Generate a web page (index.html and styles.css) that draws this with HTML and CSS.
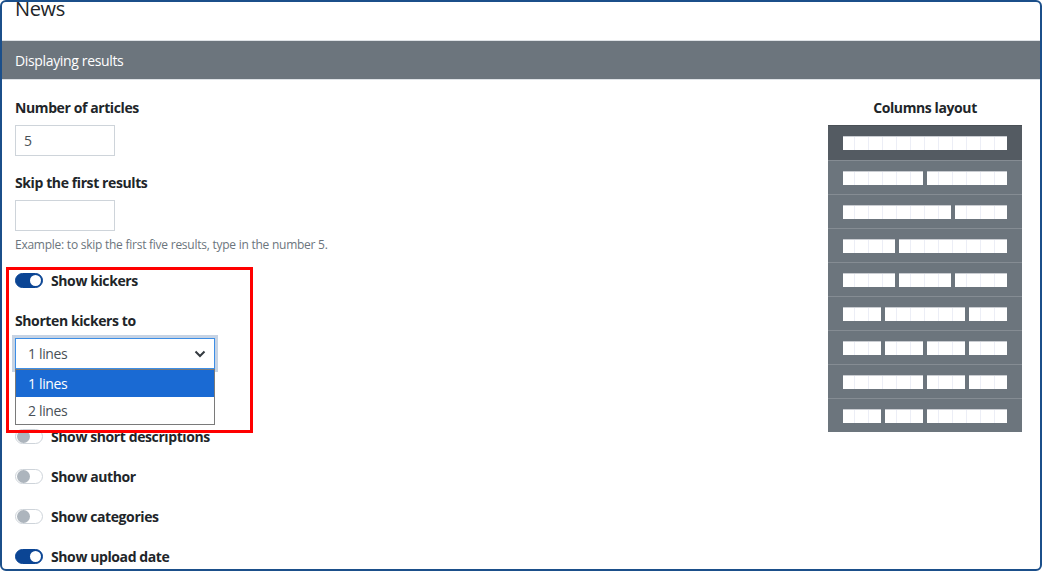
FILE: index.html
```html
<!DOCTYPE html>
<html lang="en">
<head>
    <meta charset="UTF-8">
    <meta name="viewport" content="width=device-width, initial-scale=1.0">
    <title>News module</title>
    <link rel="stylesheet" href="styles.css">
</head>
<body>
    <div class="frame">
        <div class="modal-header">
            <h2>News</h2>
        </div>
        <div class="section-bar">Displaying results</div>

        <div class="content">
            <div class="form-col">
                <div class="field">
                    <label class="field-label">Number of articles</label>
                    <input class="text-input" type="text" value="5">
                </div>
                <div class="field">
                    <label class="field-label">Skip the first results</label>
                    <input class="text-input" type="text" value="">
                    <div class="help">Example: to skip the first five results, type in the number 5.</div>
                </div>

                <div class="switch-row on">
                    <span class="switch"></span>
                    <span>Show kickers</span>
                </div>

                <div class="field select-field">
                    <label class="field-label">Shorten kickers to</label>
                    <div class="select-wrap">
                        <div class="select">
                            <span>1 lines</span>
                            <svg class="chevron" width="12" height="8" viewBox="0 0 12 8">
                                <path d="M1.5 1.5 L6 6 L10.5 1.5" fill="none" stroke="#343a40" stroke-width="2"/>
                            </svg>
                        </div>
                        <ul class="dropdown">
                            <li class="active">1 lines</li>
                            <li>2 lines</li>
                        </ul>
                    </div>
                </div>

                <div class="switch-row">
                    <span class="switch"></span>
                    <span>Show short descriptions</span>
                </div>
                <div class="switch-row">
                    <span class="switch"></span>
                    <span>Show author</span>
                </div>
                <div class="switch-row">
                    <span class="switch"></span>
                    <span>Show categories</span>
                </div>
                <div class="switch-row on">
                    <span class="switch"></span>
                    <span>Show upload date</span>
                </div>

                <div class="highlight"></div>
            </div>

            <div class="layout-col">
                <div class="field-label center">Columns layout</div>
                <div class="layouts" id="layouts"></div>
            </div>
        </div>
    </div>

    <script>
        // column spans for each layout option (12 column grid)
        const layouts = [
            [12], [6, 6], [8, 4], [4, 8], [4, 4, 4],
            [3, 6, 3], [3, 3, 3, 3], [6, 3, 3], [3, 3, 6]
        ];

        document.getElementById('layouts').innerHTML = layouts.map((cols, i) => `
            <div class="layout-row ${i === 0 ? 'selected' : ''}">
                <div class="bars">
                    ${cols.map(span => `<span class="bar" style="grid-column: span ${span}"></span>`).join('')}
                </div>
            </div>
        `).join('');
    </script>
</body>
</html>
```

FILE: styles.css
```css
* {
    margin: 0;
    padding: 0;
    box-sizing: border-box;
}

body {
    font-family: 'Segoe UI', 'Open Sans', sans-serif;
    font-size: 14px;
    letter-spacing: -0.35px;
    color: #212529;
    background: white;
}

.frame {
    width: 1042px;
    height: 571px;
    border: 2px solid #1b4f8a;
    border-radius: 6px;
    overflow: hidden;
    position: relative;
}

.modal-header {
    display: flow-root;
    height: 39px;
    border-bottom: 1px solid #dee2e6;
    padding: 0 13px;
}

.modal-header h2 {
    font-size: 20px;
    font-weight: 400;
    line-height: 24px;
    margin-top: -5px;
}

.section-bar {
    background: #6c757d;
    color: white;
    height: 39px;
    line-height: 39px;
    padding: 0 13px;
    border-bottom: 1px solid #dee2e6;
}

.content {
    display: flex;
    padding: 17px 18px 0 13px;
}

.form-col {
    flex: 1;
}

.field {
    margin-bottom: 16px;
}

.field-label {
    display: block;
    font-weight: 700;
    line-height: 21px;
    margin-bottom: 7px;
    letter-spacing: -0.4px;
}

.field-label.center {
    text-align: center;
    margin-bottom: 7px;
}

.text-input {
    display: block;
    width: 100px;
    height: 31px;
    border: 1px solid #ced4da;
    padding: 0 8px;
    font-family: inherit;
    font-size: 14px;
    color: #495057;
    outline: none;
}

.help {
    font-size: 12px;
    letter-spacing: -0.25px;
    color: #6c757d;
    margin-top: 5px;
    line-height: 18px;
}

.switch-row {
    display: flex;
    align-items: center;
    gap: 8px;
    font-weight: 700;
    letter-spacing: -0.4px;
    line-height: 21px;
    margin-bottom: 19px;
}

.switch {
    width: 28px;
    height: 15px;
    border: 1px solid #ced4da;
    border-radius: 8px;
    background: white;
    position: relative;
}

.switch::after {
    content: '';
    position: absolute;
    top: 0;
    left: 1px;
    width: 13px;
    height: 13px;
    border-radius: 50%;
    background: #adb5bd;
}

.switch-row.on .switch {
    background: #0b4594;
    border-color: #0b4594;
}

.switch-row.on .switch::after {
    top: 1px;
    left: 14px;
    width: 11px;
    height: 11px;
    background: white;
}

.select-field {
    margin-bottom: 57px;
}

.select-wrap {
    position: relative;
    width: 200px;
}

.select {
    height: 31px;
    border: 1px solid #3d8ee6;
    box-shadow: 0 0 0 3px #c6d3e4;
    display: flex;
    align-items: center;
    justify-content: space-between;
    padding: 0 8px 0 12px;
    color: #495057;
}

.dropdown {
    position: absolute;
    top: 31px;
    left: 0;
    width: 200px;
    list-style: none;
    background: white;
    border: 1px solid #7a7a7a;
    z-index: 2;
}

.dropdown li {
    height: 27px;
    line-height: 27px;
    padding-left: 12px;
    color: #495057;
}

.dropdown li.active {
    background: #1a6ad3;
    color: white;
}

.highlight {
    position: absolute;
    left: 4px;
    top: 265px;
    width: 247px;
    height: 166px;
    border: 3px solid #ff0000;
    z-index: 3;
}

.layout-col {
    width: 194px;
}

.layouts {
    background: #6c757d;
    border-top: 1px solid #4a5056;
}

.layout-row {
    height: 34px;
    padding: 0 15px;
    display: flex;
    align-items: center;
    border-top: 1px solid #858c93;
}

.layout-row:first-child {
    border-top: none;
}

.layout-row.selected {
    background: #545b62;
}

.bars {
    width: 100%;
    display: grid;
    grid-template-columns: repeat(12, 1fr);
    gap: 4px;
}

.bar {
    height: 14px;
    border-top: 1px solid #c9ccd1;
    background: repeating-linear-gradient(90deg, white 0, white 11px, #eceef6 11px, #eceef6 12px, white 12px, white 14px);
}
```
